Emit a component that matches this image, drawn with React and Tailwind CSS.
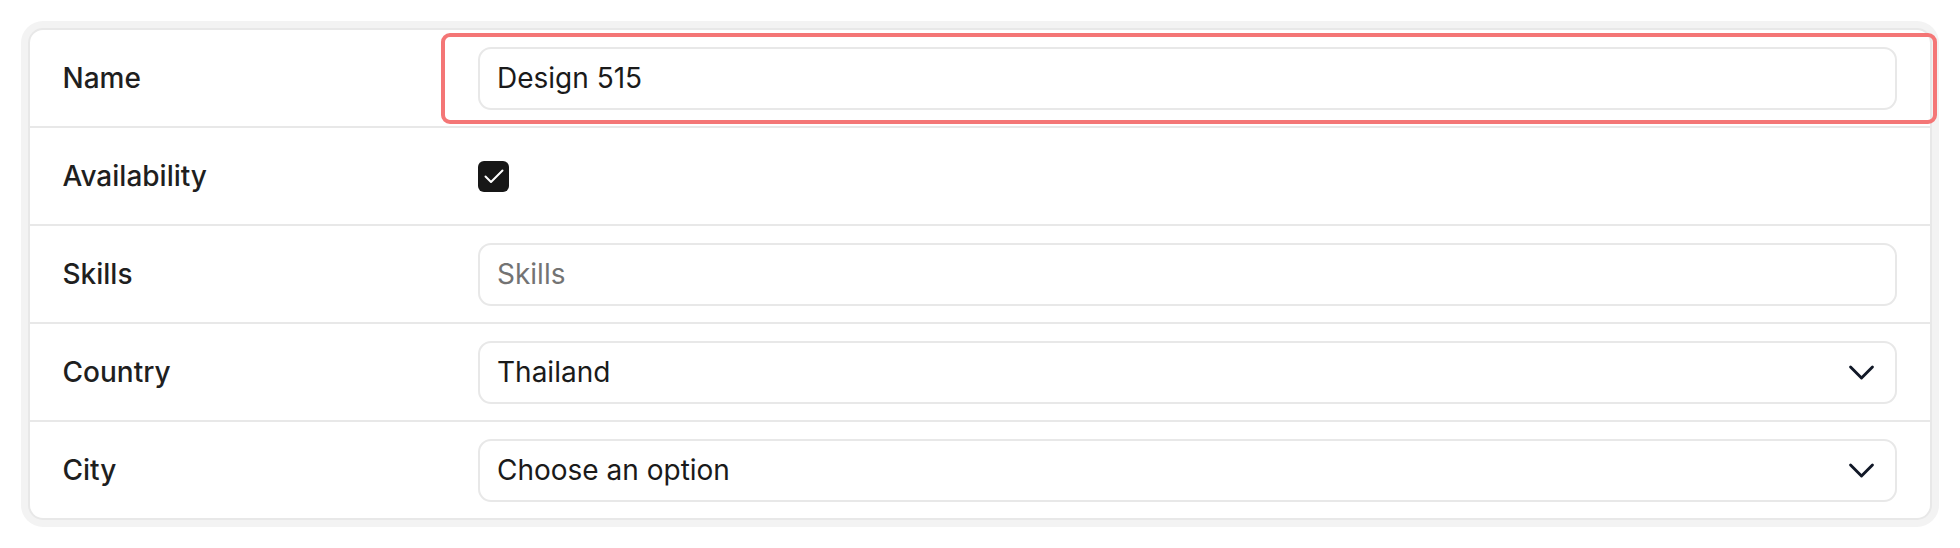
import React from "react";

function Chevron() {
  return (
    <svg width="35" height="35" viewBox="0 0 24 24" fill="none" stroke="#111827" strokeWidth="2" strokeLinecap="round" strokeLinejoin="round">
      <path d="m19.5 8.25-7.5 7.5-7.5-7.5" />
    </svg>
  );
}

function Row({ label, children, last, highlight }) {
  return (
    <div className={"flex " + (last ? "h-[96px]" : "h-[98px] border-b-2 border-[#e8e8e8]")}>
      <div className="w-[411px] shrink-0 pl-[32.5px] flex items-center text-[28px] font-medium text-[#1f1f1f]">
        {label}
      </div>
      <div className="relative flex-1 pl-[37px] pr-[33px] flex items-center">
        {children}
        {highlight && (
          <div className="pointer-events-none absolute left-0 top-[3px] right-[-7px] bottom-[2px] border-[4px] border-[#f47676] rounded-[9px]" />
        )}
      </div>
    </div>
  );
}

function Field({ children, placeholder, select }) {
  return (
    <div className="w-full h-[63px] border-2 border-[#e8e8e8] rounded-[13px] bg-white flex items-center pl-[17px] pr-[16px]">
      <span className={"flex-1 text-[28px] " + (placeholder ? "text-[#737373]" : "text-[#1a1a1a]")}>
        {children}
      </span>
      {select && <Chevron />}
    </div>
  );
}

export default function App() {
  return (
    <div className="bg-white w-[1960px] h-[548px] p-[21px] font-['Inter',sans-serif]">
      <div className="bg-[#f3f3f3] rounded-[22px] p-[7px]">
        <div className="bg-white border-2 border-[#e8e8e8] rounded-[15px]">
          <Row label="Name" highlight>
            <Field>Design 515</Field>
          </Row>
          <Row label="Availability">
            <div className="w-[31px] h-[31px] rounded-[6px] bg-[#171717] flex items-center justify-center">
              <svg width="20" height="15" viewBox="0 0 20 15" fill="none" stroke="white" strokeWidth="2" strokeLinecap="round" strokeLinejoin="round">
                <path d="M1.5 7.5l5.5 5.5L18.5 1.5" />
              </svg>
            </div>
          </Row>
          <Row label="Skills">
            <Field placeholder>Skills</Field>
          </Row>
          <Row label="Country">
            <Field select>Thailand</Field>
          </Row>
          <Row label="City" last>
            <Field select>Choose an option</Field>
          </Row>
        </div>
      </div>
    </div>
  );
}
